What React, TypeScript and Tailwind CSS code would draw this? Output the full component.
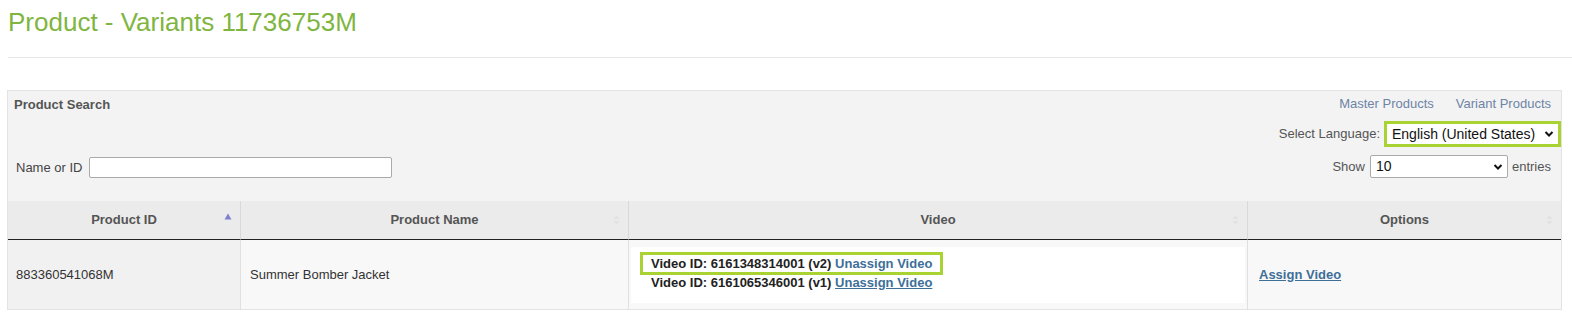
import React from "react";

const font = { fontFamily: '"Liberation Sans", Arial, sans-serif' };

function SortBoth() {
  return (
    <svg width="7" height="12" viewBox="0 0 7 12" className="absolute right-[8px] top-1/2 -translate-y-1/2">
      <path d="M3.5 1 L6.5 5 L0.5 5 Z" fill="#e2e2e2" />
      <path d="M3.5 11 L6.5 7 L0.5 7 Z" fill="#e2e2e2" />
    </svg>
  );
}

function SortAsc() {
  return (
    <svg width="8" height="7" viewBox="0 0 8 7" className="absolute right-[8px] top-[12px]">
      <path d="M4 0.5 L7.5 6.5 L0.5 6.5 Z" fill="#7f80d0" />
    </svg>
  );
}

function Chevron() {
  return (
    <svg width="10" height="8" viewBox="0 0 10 8">
      <path d="M1.5 2 L5 5.5 L8.5 2" fill="none" stroke="#111" strokeWidth="2" />
    </svg>
  );
}

export default function App() {
  return (
    <div className="w-[1572px] h-[316px] bg-white overflow-hidden" style={font}>
      <div className="pl-[8px] pt-[7px]">
        <h1 className="text-[26px] leading-[30px] text-[#7fb541] font-normal">
          Product - Variants 11736753M
        </h1>
        <div className="mt-[20px] h-px bg-[#e6e6e6]" />
      </div>

      <div className="ml-[7px] mt-[32px] w-[1555px] border border-[#e3e3e3] bg-[#f3f3f3]">
        <div className="flex justify-between h-[110px]">
          <div className="flex flex-col justify-between pl-[6px] pt-[6px] pb-[23px]">
            <div className="text-[13px] leading-[15px] font-bold text-[#555]">Product Search</div>
            <div className="flex items-center gap-[7px]">
              <span className="text-[13px] text-[#444] ml-[2px]">Name or ID</span>
              <div className="w-[303px] h-[21px] bg-white border border-[#aaa] rounded-[2px]" />
            </div>
          </div>

          <div className="flex flex-col items-end pr-[10px] pt-[5px]">
            <div className="flex gap-[22px] text-[13px] leading-[15px] text-[#6d84a6]">
              <span>Master Products</span>
              <span>Variant Products</span>
            </div>
            <div className="flex items-center mt-[10px] -mr-[10px]">
              <span className="text-[13px] text-[#555] mr-[4px]">Select Language:</span>
              <div className="h-[26px] w-[177px] border-[3px] border-[#a8d332] bg-white flex items-center justify-between pl-[5px] pr-[4px]">
                <span className="text-[14px] text-[#111]">English (United States)</span>
                <Chevron />
              </div>
            </div>
            <div className="flex items-center mt-[8px]">
              <span className="text-[13px] text-[#555] mr-[5px]">Show</span>
              <div className="h-[23px] w-[138px] border border-[#aaa] bg-white rounded-[2px] flex items-center justify-between pl-[5px] pr-[4px]">
                <span className="text-[14px] text-[#111]">10</span>
                <Chevron />
              </div>
              <span className="text-[13px] text-[#555] ml-[4px]">entries</span>
            </div>
          </div>
        </div>

        <div className="grid grid-cols-[233px_388px_619px_1fr]">
          <div className="relative h-[39px] bg-[#ebebeb] border-b border-[#222] border-r border-r-[#d9d9d9] flex items-center justify-center text-[13px] font-bold text-[#555]">
            Product ID
            <SortAsc />
          </div>
          <div className="relative h-[39px] bg-[#ebebeb] border-b border-[#222] border-r border-r-[#d9d9d9] flex items-center justify-center text-[13px] font-bold text-[#555]">
            Product Name
            <SortBoth />
          </div>
          <div className="relative h-[39px] bg-[#ebebeb] border-b border-[#222] border-r border-r-[#d9d9d9] flex items-center justify-center text-[13px] font-bold text-[#555]">
            Video
            <SortBoth />
          </div>
          <div className="relative h-[39px] bg-[#ebebeb] border-b border-[#222] flex items-center justify-center text-[13px] font-bold text-[#555]">
            Options
            <SortBoth />
          </div>

          <div className="h-[69px] bg-[#f1f1f1] border-r border-[#e0e0e0] flex items-center pl-[8px] text-[13px] text-[#333]">
            883360541068M
          </div>
          <div className="h-[69px] bg-[#f8f8f8] border-r border-[#e0e0e0] flex items-center pl-[9px] text-[13px] text-[#333]">
            Summer Bomber Jacket
          </div>
          <div className="h-[69px] bg-[#f8f8f8] border-r border-[#e0e0e0] px-[2px] pt-[7px] pb-[6px]">
            <div className="h-full bg-white pl-[20px] pt-[8px] text-[13px] leading-[17px] font-bold text-[#222]">
              <div className="w-fit -ml-[8px] px-[8px] ring-3 ring-[#a8d332]">
                Video ID: 6161348314001 (v2) <span className="text-[#3e6f99]">Unassign Video</span>
              </div>
              <div className="mt-[2px]">
                Video ID: 6161065346001 (v1) <span className="text-[#3e6f99] underline">Unassign Video</span>
              </div>
            </div>
          </div>
          <div className="h-[69px] bg-[#f8f8f8] flex items-center pl-[11px] text-[13px] font-bold">
            <span className="text-[#3e6f99] underline">Assign Video</span>
          </div>
        </div>
      </div>
    </div>
  );
}
